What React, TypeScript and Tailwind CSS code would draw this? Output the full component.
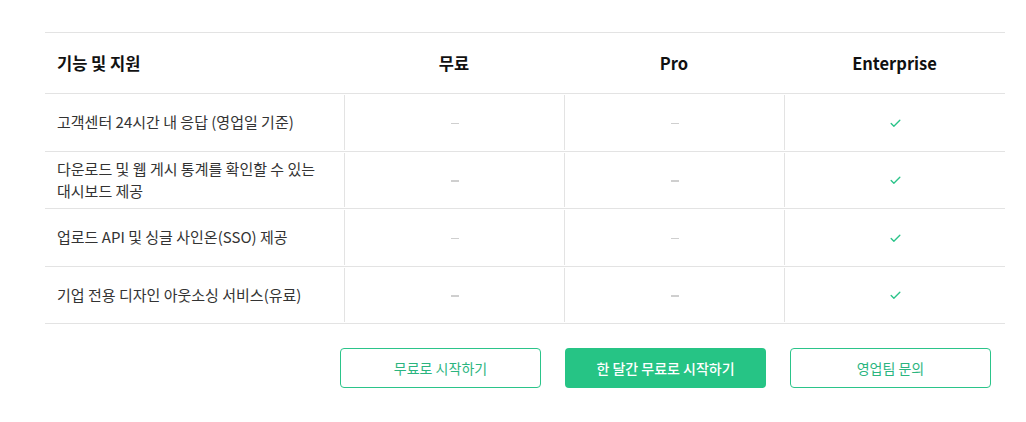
import { Check } from "lucide-react";

const FONT = {
  fontFamily: '"Noto Sans CJK KR", "Noto Sans", sans-serif',
};

const ROWS: { label: string[]; free: boolean; pro: boolean; enterprise: boolean }[] = [
  { label: ["고객센터 24시간 내 응답 (영업일 기준)"], free: false, pro: false, enterprise: true },
  { label: ["다운로드 및 웹 게시 통계를 확인할 수 있는", "대시보드 제공"], free: false, pro: false, enterprise: true },
  { label: ["업로드 API 및 싱글 사인온(SSO) 제공"], free: false, pro: false, enterprise: true },
  { label: ["기업 전용 디자인 아웃소싱 서비스(유료)"], free: false, pro: false, enterprise: true },
];

function Mark({ on }: { on: boolean }) {
  if (on) {
    return <Check size={13} strokeWidth={2.5} className="text-[#2bc48a] mt-[2px]" />;
  }
  return <span className="block h-[1.5px] w-[8px] bg-[#cfcfcf] mt-[2px]" />;
}

export default function App() {
  return (
    <div className="w-[1026px] h-[422px] bg-white" style={FONT}>
      <div className="ml-[45px] w-[960px] pt-[32px]">
        <div className="border-t border-[#e3e3e3]">
          <div className="grid grid-cols-[299px_220px_220px_221px] h-[61px] border-b border-[#e3e3e3] items-center text-[16.5px] font-bold text-[#111]">
            <div className="pl-3">기능 및 지원</div>
            <div className="text-center">무료</div>
            <div className="text-center">Pro</div>
            <div className="text-center">Enterprise</div>
          </div>
          {ROWS.map((row, i) => (
            <div
              key={i}
              className="grid grid-cols-[299px_220px_220px_221px] h-[57.5px] border-b border-[#e3e3e3] text-[15px] text-[#333]"
            >
              <div className="pl-3 flex flex-col justify-center leading-[22px]">
                {row.label.map((l) => (
                  <span key={l}>{l}</span>
                ))}
              </div>
              <div className="border-l border-[#e3e3e3] my-[1px] flex items-center justify-center">
                <Mark on={row.free} />
              </div>
              <div className="border-l border-[#e3e3e3] my-[1px] flex items-center justify-center">
                <Mark on={row.pro} />
              </div>
              <div className="border-l border-[#e3e3e3] my-[1px] flex items-center justify-center">
                <Mark on={row.enterprise} />
              </div>
            </div>
          ))}
        </div>
        <div className="flex justify-end gap-6 pr-[14px] mt-6 text-[14px]">
          <button className="w-[201px] h-10 rounded border border-[#2bc48a] text-[#2bb57f]">
            무료로 시작하기
          </button>
          <button className="w-[201px] h-10 rounded bg-[#26c485] text-white font-medium">
            한 달간 무료로 시작하기
          </button>
          <button className="w-[201px] h-10 rounded border border-[#2bc48a] text-[#2bb57f]">
            영업팀 문의
          </button>
        </div>
      </div>
    </div>
  );
}
